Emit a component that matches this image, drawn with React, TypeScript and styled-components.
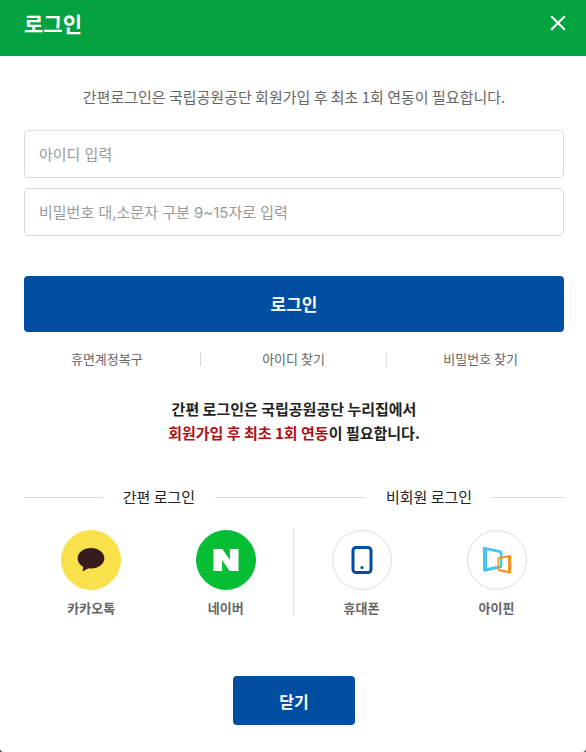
import React from "react";
import styled, { createGlobalStyle } from "styled-components";

const GlobalStyle = createGlobalStyle`
  *, *::before, *::after { box-sizing: border-box; }
  html, body, #root { height: 100%; }
  body {
    margin: 0;
    background: #4a4a4a;
    color: #222;
    font-family: "Noto Sans CJK KR", "Noto Sans", sans-serif;
    font-size: 15px;
    line-height: 24px;
  }
  button, input { font: inherit; }
`;

const Dialog = styled.main`
  display: flex;
  flex-direction: column;
  min-height: 100%;
  background: #fff;
  border-radius: 0 0 4px 4px;
`;

const Header = styled.header`
  display: flex;
  align-items: center;
  justify-content: space-between;
  height: 56px;
  padding: 0 20px 10px 24px;
  background: #03a33f;
  color: #fff;
`;

const Title = styled.h1`
  margin: 0;
  font-size: 21px;
  font-weight: 700;
  line-height: 32px;
`;

const IconButton = styled.button`
  display: flex;
  padding: 0;
  border: 0;
  background: none;
  color: inherit;
  cursor: pointer;
`;

const Content = styled.div`
  display: flex;
  flex-direction: column;
  padding: 29px 22px 27px 24px;
`;

const Intro = styled.p`
  margin: 0 0 21px;
  color: #666;
  text-align: center;
`;

const Form = styled.form`
  display: flex;
  flex-direction: column;
  gap: 10px;
`;

const Field = styled.input`
  width: 100%;
  height: 48px;
  padding: 0 14px;
  border: 1px solid #dcdcdc;
  border-radius: 4px;
  background: #fff;
  color: #222;
  font-family: Inter, "Noto Sans CJK KR", sans-serif;
  &::placeholder { color: #999; opacity: 1; }
`;

const PrimaryButton = styled.button<{ $wide?: boolean }>`
  align-self: ${(p) => (p.$wide ? "stretch" : "center")};
  height: ${(p) => (p.$wide ? 56 : 49)}px;
  min-width: 122px;
  margin-top: ${(p) => (p.$wide ? 30 : 60)}px;
  padding: 0 24px;
  border: 0;
  border-radius: 4px;
  background: #004ea2;
  color: #fff;
  font-size: ${(p) => (p.$wide ? 17 : 16)}px;
  font-weight: 700;
  cursor: pointer;
`;

const Links = styled.ul`
  display: grid;
  grid-template-columns: repeat(3, 1fr);
  margin: 20px -10px 0;
  padding: 0;
  list-style: none;
`;

const LinkItem = styled.li`
  height: 14px;
  border-right: 1px solid #dcdcdc;
  font-size: 13px;
  line-height: 14px;
  text-align: center;
  &:last-child { border-right: 0; }
`;

const TextLink = styled.a`
  color: #666;
  text-decoration: none;
`;

const Notice = styled.p`
  margin: 31px 0 40px;
  font-weight: 700;
  text-align: center;
`;

const Accent = styled.em`
  color: #b01116;
  font-style: normal;
`;

const Groups = styled.div`
  display: grid;
  grid-template-columns: repeat(2, 1fr);
`;

const GroupTitle = styled.h2`
  display: flex;
  align-items: center;
  gap: 20px;
  margin: 0 0 21px;
  font-size: 15px;
  font-weight: 400;
  line-height: 24px;
  &::before, &::after {
    content: "";
    flex: 1;
    height: 1px;
    background: #dcdcdc;
  }
`;

const Providers = styled.div<{ $divided?: boolean }>`
  display: grid;
  grid-template-columns: repeat(2, 1fr);
  height: 86px;
  border-right: ${(p) => (p.$divided ? "1px solid #dcdcdc" : "0")};
`;

const Provider = styled.a`
  display: flex;
  flex-direction: column;
  align-items: center;
  gap: 8px;
  color: #666;
  font-size: 13px;
  font-weight: 700;
  line-height: 20px;
  text-decoration: none;
`;

const Badge = styled.span<{ $fill?: string }>`
  display: flex;
  align-items: center;
  justify-content: center;
  width: 60px;
  height: 60px;
  border: 1px solid ${(p) => p.$fill ?? "#dcdcdc"};
  border-radius: 50%;
  background: ${(p) => p.$fill ?? "#fff"};
`;

const CloseIcon = () => (
  <svg width="16" height="16" viewBox="0 0 16 16" fill="none" stroke="currentColor" strokeWidth="2.2" aria-hidden="true">
    <path d="M1.2 1.2 14.8 14.8M14.8 1.2 1.2 14.8" />
  </svg>
);

const TalkIcon = () => (
  <svg width="28" height="24" viewBox="0 0 28 24" aria-hidden="true">
    <path fill="#371c1d" d="M14 0C6.600 0 .6 4.600.6 10.200c0 3.700 2.200 6.700 5.600 8.500L5.500 23.600l6-3.400c.8.100 1.700.2 2.500.2 7.400 0 13.400-4.600 13.400-10.200S21.400 0 14 0Z" />
  </svg>
);

const NaverIcon = () => (
  <svg width="26" height="22" viewBox="0 0 26 22" aria-hidden="true">
    <path fill="#fff" d="M.5 0h8.800l7.600 11V0h8.600v22h-8.800L9.100 11v11H.5Z" />
  </svg>
);

const PhoneIcon = () => (
  <svg width="22" height="28" viewBox="0 0 22 28" aria-hidden="true">
    <rect x="2" y="1.500" width="18" height="25" rx="3" fill="none" stroke="#004ea2" strokeWidth="3" />
    <circle cx="11" cy="21.500" r="1.600" fill="#004ea2" />
  </svg>
);

const IpinIcon = () => (
  <svg width="30" height="28" viewBox="0 0 30 28" aria-hidden="true">
    <path fill="#45c4f3" fillRule="evenodd" d="M3 .9 18.500 4.200Q20.400 4.600 20.400 6.500V20Q20.400 21.900 18.500 22.300L3 25.700Q1 26 1 24V2.600Q1 .5 3 .9ZM5.200 4.200V21.900L18 19.200V6.900Z" />
    <path fill="#f7931e" fillRule="evenodd" d="M17 10.900 27.500 9.100Q29.200 9 29.200 10.500V26Q29.200 27.700 27.500 27.400L17 25.200Q15.500 24.900 15.500 23.500V12.400Q15.500 11.100 17 10.900ZM17.200 12.900V23.100L26 24.800V11.400Z" />
  </svg>
);

export default function App() {
  return (
    <>
      <GlobalStyle />
      <Dialog>
        <Header>
          <Title>로그인</Title>
          <IconButton type="button" aria-label="창 닫기">
            <CloseIcon />
          </IconButton>
        </Header>
        <Content>
          <Intro>간편로그인은 국립공원공단 회원가입 후 최초 1회 연동이 필요합니다.</Intro>
          <Form onSubmit={(e: React.FormEvent) => e.preventDefault()}>
            <Field type="text" aria-label="아이디" placeholder="아이디 입력" />
            <Field type="password" aria-label="비밀번호" placeholder="비밀번호 대,소문자 구분 9~15자로 입력" />
            <PrimaryButton type="submit" $wide>로그인</PrimaryButton>
          </Form>
          <Links>
            <LinkItem><TextLink href="#restore">휴면계정복구</TextLink></LinkItem>
            <LinkItem><TextLink href="#find-id">아이디 찾기</TextLink></LinkItem>
            <LinkItem><TextLink href="#find-password">비밀번호 찾기</TextLink></LinkItem>
          </Links>
          <Notice>
            간편 로그인은 국립공원공단 누리집에서
            <br />
            <Accent>회원가입 후 최초 1회 연동</Accent>이 필요합니다.
          </Notice>
          <Groups>
            <section>
              <GroupTitle>간편 로그인</GroupTitle>
              <Providers $divided>
                <Provider href="#kakao"><Badge $fill="#f9e14b"><TalkIcon /></Badge>카카오톡</Provider>
                <Provider href="#naver"><Badge $fill="#06be34"><NaverIcon /></Badge>네이버</Provider>
              </Providers>
            </section>
            <section>
              <GroupTitle>비회원 로그인</GroupTitle>
              <Providers>
                <Provider href="#phone"><Badge><PhoneIcon /></Badge>휴대폰</Provider>
                <Provider href="#ipin"><Badge><IpinIcon /></Badge>아이핀</Provider>
              </Providers>
            </section>
          </Groups>
          <PrimaryButton type="button">닫기</PrimaryButton>
        </Content>
      </Dialog>
    </>
  );
}
